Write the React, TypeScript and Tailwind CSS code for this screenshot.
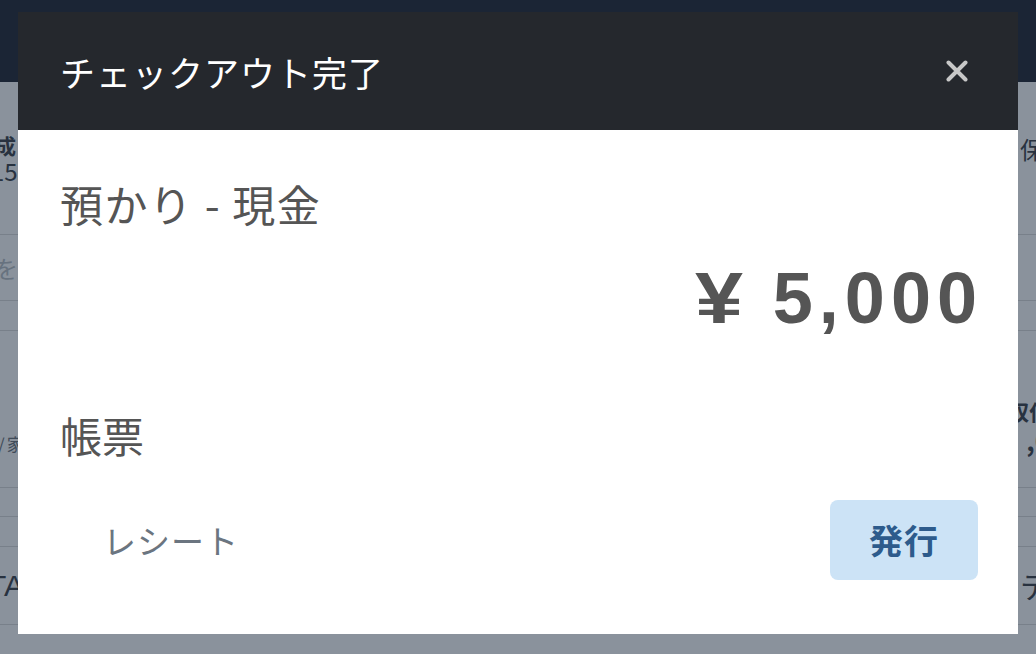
import React from 'react';

function BackgroundPage() {
  return (
    <div className="flex h-full flex-col text-[#3a3f47]">
      <header className="h-[82px] shrink-0 bg-[#212531]" />

      <div className="flex h-[153px] shrink-0 items-start justify-between border-b border-[#dbdbdb] pt-[50px]">
        <div className="-ml-[5px]">
          <div className="text-[21px] font-bold leading-[26px]">成</div>
          <div className="-ml-[4px] text-[24px] leading-[26px]">15</div>
        </div>
        <div className="-mr-[8px] pt-[4px] text-[24px] leading-[26px]">保</div>
      </div>

      <div className="flex h-[66px] shrink-0 items-center border-b border-[#dbdbdb]">
        <span className="-ml-[6px] text-[24px] text-[#b9bec4]">を</span>
      </div>

      <div className="h-[30px] shrink-0 border-b border-[#dbdbdb]" />

      <div className="flex h-[157px] shrink-0 items-start justify-between border-b border-[#dbdbdb]">
        <div className="-ml-[2px] flex items-center gap-[2px] pt-[100px] text-[17px] text-[#6a7079]">
          <span>/</span>
          <span>家</span>
        </div>
        <div className="-mr-[14px] pt-[66px] text-right font-bold">
          <div className="text-[21px] leading-[28px]">収付</div>
          <div className="text-[26px] leading-[30px]">,0</div>
        </div>
      </div>

      <div className="h-[29px] shrink-0 border-b border-[#dbdbdb]" />
      <div className="h-[30px] shrink-0 border-b border-[#dbdbdb]" />

      <div className="flex h-[78px] shrink-0 items-center justify-between border-b border-[#dbdbdb]">
        <span className="-ml-[12px] font-['Liberation_Sans',sans-serif] text-[30px]">TA</span>
        <span className="-mr-[14px] text-[30px]">テ</span>
      </div>
    </div>
  );
}

function CloseIcon() {
  return (
    <svg width="22" height="22" viewBox="0 0 22 22" fill="none">
      <path d="M2.5 2.5 L19.5 19.5 M19.5 2.5 L2.5 19.5" stroke="#c8c8c8" strokeWidth="4" strokeLinecap="round" />
    </svg>
  );
}

function CheckoutModal() {
  return (
    <div className="flex w-[1000px] flex-col bg-white">
      <div className="flex h-[118px] items-center justify-between bg-[#25282d] pl-[42px] pr-[50px]">
        <h1 className="text-[35px] font-normal leading-none tracking-[1px] text-white">
          チェックアウト完了
        </h1>
        <button className="flex items-center justify-center">
          <CloseIcon />
        </button>
      </div>

      <div className="flex flex-col pb-[54px] pl-[42px] pr-[40px] pt-[52px] text-[#555555]">
        <div className="text-[43px] leading-none tracking-[1.5px]">預かり - 現金</div>

        <div className="mt-[37px] -mr-[5px] flex items-baseline justify-end gap-[34px] font-['Liberation_Sans',sans-serif] text-[72px] font-bold leading-none">
          <span className="inline-block scale-x-[1.2]">¥</span>
          <span className="tracking-[6px]">5,000</span>
        </div>

        <div className="mt-[80px] text-[42px] leading-none">帳票</div>

        <div className="mt-[44px] flex items-center justify-between">
          <span className="pl-[43px] text-[33px] leading-none tracking-[1px] text-[#6b7580]">
            レシート
          </span>
          <button className="flex h-[80px] w-[148px] items-center justify-center rounded-[8px] bg-[#cce3f6] text-[34px] font-bold leading-none tracking-[1px] text-[#2d5b8c]">
            発行
          </button>
        </div>
      </div>
    </div>
  );
}

export default function App() {
  return (
    <div className="relative h-[654px] w-[1036px] overflow-hidden bg-white font-['Noto_Sans_CJK_JP','Noto_Sans',sans-serif]">
      <BackgroundPage />
      <div className="fixed inset-0 flex items-start justify-center bg-[#15253980] pt-[12px]">
        <CheckoutModal />
      </div>
    </div>
  );
}
